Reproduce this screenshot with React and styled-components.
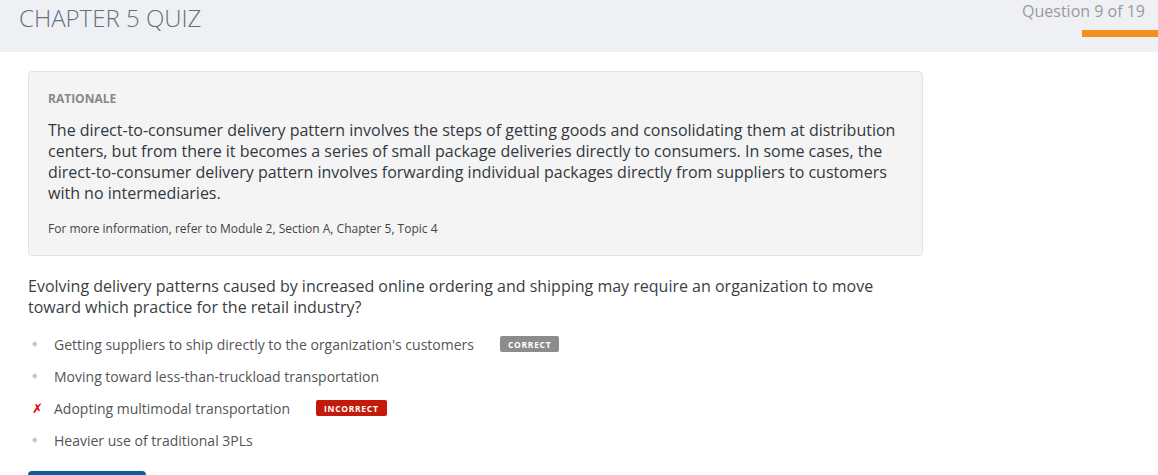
import React from 'react';
import styled, { createGlobalStyle } from 'styled-components';

const GlobalStyle = createGlobalStyle`
  body {
    margin: 0;
    font-family: 'Open Sans', 'Liberation Sans', sans-serif;
    background: #ffffff;
  }
`;

// 상단 헤더
const Header = styled.header`
  height: 52px;
  background: #eff0f4;
  display: flex;
  justify-content: space-between;
  align-items: flex-start;
  padding-left: 19px;
`;

const Title = styled.h1`
  margin: 0;
  padding-top: 1px;
  font-size: 24px;
  font-weight: 300;
  line-height: 34px;
  color: #65707d;
`;

const Progress = styled.div`
  display: flex;
  flex-direction: column;
  align-items: flex-end;
`;

const Counter = styled.span`
  font-size: 16px;
  line-height: 22px;
  color: #9a9a9a;
  padding-right: 13px;
`;

const ProgressBar = styled.div`
  margin-top: 8px;
  width: 76px;
  height: 7px;
  background: #f39120;
`;

const Main = styled.main`
  padding: 19px 0 0 28px;
  width: 895px;
`;

// 해설 박스
const Rationale = styled.section`
  background: #f4f4f4;
  border: 1px solid #e3e3e3;
  border-radius: 4px;
  padding: 19px 20px 18px 19px;
`;

const Label = styled.div`
  font-size: 12px;
  font-weight: 700;
  line-height: 16px;
  color: #888888;
`;

const RationaleText = styled.p`
  margin: 13px 0 0;
  font-size: 16px;
  line-height: 21px;
  color: #333840;
`;

const Reference = styled.p`
  margin: 17px 0 0;
  font-size: 12px;
  line-height: 16px;
  color: #444444;
`;

const Question = styled.p`
  margin: 20px 0 0;
  font-size: 16px;
  line-height: 21px;
  color: #3a3e44;
`;

const Options = styled.ul`
  list-style: none;
  margin: 10px 0 0;
  padding: 0;
`;

const Option = styled.li`
  display: flex;
  align-items: center;
  height: 32px;
  font-size: 14px;
  color: #555555;
`;

const Marker = styled.span`
  width: 26px;
  display: flex;
  align-items: center;
  padding-left: 4px;
  box-sizing: border-box;
`;

const Diamond = styled.span`
  width: 3.5px;
  height: 3.5px;
  margin-left: 0.5px;
  background: #c6c6c6;
  transform: rotate(45deg);
`;

const Cross = styled.span`
  color: #e60000;
  font-family: 'DejaVu Sans', sans-serif;
  font-size: 13px;
  font-weight: 700;
  font-style: italic;
`;

const Badge = styled.span`
  margin-left: 26px;
  height: 16px;
  padding: 0 8px;
  border-radius: 2px;
  display: inline-flex;
  align-items: center;
  font-size: 8.5px;
  font-weight: 700;
  letter-spacing: 0.7px;
  color: #ffffff;
  background: ${p => (p.$tone === 'bad' ? '#c41a0c' : '#8c8c8c')};
`;

const Button = styled.button`
  display: block;
  margin-top: 15px;
  width: 118px;
  height: 36px;
  border: none;
  border-radius: 4px;
  background: #0d5d9a;
`;

const options = [
  { text: "Getting suppliers to ship directly to the organization's customers", badge: 'CORRECT' },
  { text: 'Moving toward less-than-truckload transportation' },
  { text: 'Adopting multimodal transportation', badge: 'INCORRECT', wrong: true },
  { text: 'Heavier use of traditional 3PLs' },
];

const App = () => {
  return (
    <div>
      <GlobalStyle />
      <Header>
        <Title>CHAPTER 5 QUIZ</Title>
        <Progress>
          <Counter>Question 9 of 19</Counter>
          <ProgressBar />
        </Progress>
      </Header>
      <Main>
        <Rationale>
          <Label>RATIONALE</Label>
          <RationaleText>
            The direct-to-consumer delivery pattern involves the steps of getting goods and consolidating them at distribution
            centers, but from there it becomes a series of small package deliveries directly to consumers. In some cases, the
            direct-to-consumer delivery pattern involves forwarding individual packages directly from suppliers to customers
            with no intermediaries.
          </RationaleText>
          <Reference>For more information, refer to Module 2, Section A, Chapter 5, Topic 4</Reference>
        </Rationale>
        <Question>
          Evolving delivery patterns caused by increased online ordering and shipping may require an organization to move
          toward which practice for the retail industry?
        </Question>
        <Options>
          {options.map(o => (
            <Option key={o.text}>
              <Marker>{o.wrong ? <Cross>✗</Cross> : <Diamond />}</Marker>
              {o.text}
              {o.badge && <Badge $tone={o.wrong ? 'bad' : 'ok'}>{o.badge}</Badge>}
            </Option>
          ))}
        </Options>
        <Button aria-label="Next" />
      </Main>
    </div>
  );
};

export default App;
